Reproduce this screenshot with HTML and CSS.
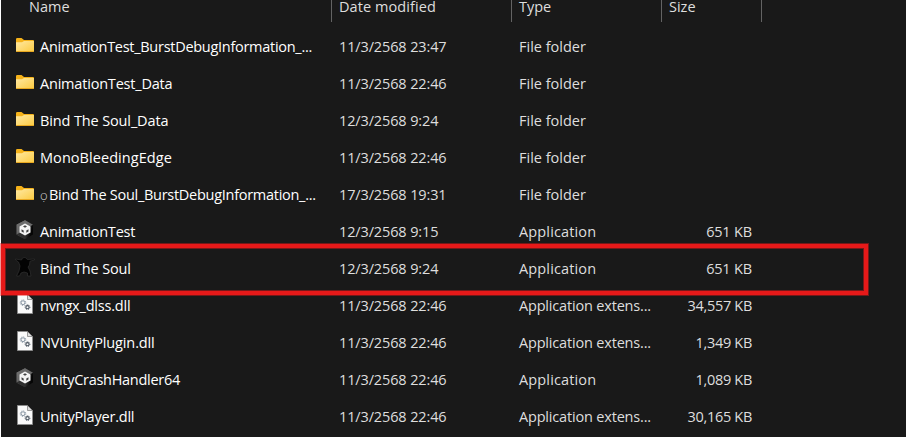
FILE: index.html
```html
<!DOCTYPE html>
<html lang="en">
<head>
<meta charset="utf-8">
<title>Files</title>
<link rel="stylesheet" href="styles.css">
</head>
<body>
<svg class="defs" width="0" height="0">
  <defs>
    <linearGradient id="gold" x1="0" y1="0" x2="1" y2="1"><stop offset="0" stop-color="#ffe9a3"/><stop offset="1" stop-color="#fcca40"/></linearGradient>
    <linearGradient id="hex" x1="0" y1="0" x2="1" y2="0.3"><stop offset="0" stop-color="#777"/><stop offset=".5" stop-color="#555"/><stop offset="1" stop-color="#050505"/></linearGradient>
    <symbol id="folder" viewBox="0 0 20 20">
      <path d="M1 2.200Q1 1 2.200 1H6.500L9 3H18Q19 3 19 4V14H1Z" fill="#f5b21a"/>
      <path d="M1 5.300H7L9 4H19V14Q19 15 18 15H2Q1 15 1 14Z" fill="url(#gold)"/>
      <path d="M1.300 14.500H18.700" stroke="#e9a820" stroke-width="1"/>
    </symbol>
    <symbol id="unity" viewBox="0 0 20 20">
      <path d="M10 .3L18 4.800V14.500L10 19.300L1.500 14.500V4.800Z" fill="url(#hex)"/>
      <path d="M10 .3L18 4.800L10 9L1.500 4.800Z" fill="#6c6c6c"/>
      <path d="M1.500 14.500L10 10V19.300Z" fill="#303030"/>
      <path d="M10 3.600L15.500 6.500V12.400L10 15.600L4.500 12.400V6.500Z" fill="#f4f4f4"/>
      <path d="M10 5.300L12 6.500L10 7.700L8 6.500ZM6.500 9.200L8.700 10.500V12.700L6.500 11.400ZM13.500 9.200L11.300 10.500V12.700L13.500 11.400Z" fill="#444"/>
    </symbol>
    <symbol id="dll" viewBox="0 0 20 20">
      <path d="M2.500 .5H12.500L17.500 5.500V19.500H2.500Z" fill="#fafafa" stroke="#8c8c8c"/>
      <path d="M12.500 .5V5.500H17.500Z" fill="#ddd" stroke="#777" stroke-width=".7"/>
      <circle cx="8" cy="8.700" r="1.900" fill="none" stroke="#8b98a5" stroke-width="1"/>
      <circle cx="8" cy="8.700" r="2.800" fill="none" stroke="#8b98a5" stroke-width="1" stroke-dasharray="1.100 1.100"/>
      <circle cx="12.500" cy="13.200" r="1.600" fill="none" stroke="#4b5560" stroke-width="1.100"/>
      <circle cx="12.500" cy="13.200" r="2.400" fill="none" stroke="#4b5560" stroke-width=".9" stroke-dasharray=".95 .935"/>
    </symbol>
    <symbol id="figure" viewBox="0 0 20 20">
      <path d="M.5 2L6.500 3L7.500 1L10 .3L12.500 2.500L19.500 2V3L15 4.200L14.500 8L13 10L15 14L16 19H12.500L12.500 16L9 15L6 16L4.500 19H1.500L4 14L5 9L3.500 5L.5 3Z" fill="#030303" stroke="#303030" stroke-width=".7"/>
    </symbol>
  </defs>
</svg>
<main class="files">
  <header class="head">
    <div class="h-name">Name</div>
    <div class="h-cell h-date">Date modified</div>
    <div class="h-cell">Type</div>
    <div class="h-cell">Size</div>
    <div class="h-end"></div>
  </header>
  <div class="row"><svg class="icon folder"><use href="#folder"/></svg><div class="name tightest">AnimationTest_BurstDebugInformation_...</div><div class="date">11/3/2568 23:47</div><div class="type">File folder</div><div class="size"></div></div>
  <div class="row"><svg class="icon folder"><use href="#folder"/></svg><div class="name tight">AnimationTest_Data</div><div class="date">11/3/2568 22:46</div><div class="type">File folder</div><div class="size"></div></div>
  <div class="row"><svg class="icon folder"><use href="#folder"/></svg><div class="name snug">Bind The Soul_Data</div><div class="date">12/3/2568 9:24</div><div class="type">File folder</div><div class="size"></div></div>
  <div class="row"><svg class="icon folder"><use href="#folder"/></svg><div class="name loose">MonoBleedingEdge</div><div class="date">11/3/2568 22:46</div><div class="type">File folder</div><div class="size"></div></div>
  <div class="row"><svg class="icon folder"><use href="#folder"/></svg><div class="name tightest"><span class="mark">&#x1ECD;</span>Bind The Soul_BurstDebugInformation_...</div><div class="date">17/3/2568 19:31</div><div class="type">File folder</div><div class="size"></div></div>
  <div class="row"><svg class="icon"><use href="#unity"/></svg><div class="name tight">AnimationTest</div><div class="date">12/3/2568 9:15</div><div class="type app">Application</div><div class="size short">651 KB</div></div>
  <div class="row"><svg class="icon"><use href="#figure"/></svg><div class="name snug">Bind The Soul</div><div class="date">12/3/2568 9:24</div><div class="type app">Application</div><div class="size short">651 KB</div></div>
  <div class="row"><svg class="icon"><use href="#dll"/></svg><div class="name tight">nvngx_dlss.dll</div><div class="date">11/3/2568 22:46</div><div class="type ext">Application extens...</div><div class="size">34,557 KB</div></div>
  <div class="row"><svg class="icon"><use href="#dll"/></svg><div class="name snug">NVUnityPlugin.dll</div><div class="date">11/3/2568 22:46</div><div class="type ext">Application extens...</div><div class="size">1,349 KB</div></div>
  <div class="row"><svg class="icon"><use href="#unity"/></svg><div class="name tightest">UnityCrashHandler64</div><div class="date">11/3/2568 22:46</div><div class="type app">Application</div><div class="size">1,089 KB</div></div>
  <div class="row"><svg class="icon"><use href="#dll"/></svg><div class="name tight">UnityPlayer.dll</div><div class="date">11/3/2568 22:46</div><div class="type ext">Application extens...</div><div class="size">30,165 KB</div></div>
  <div class="highlight"></div>
</main>
</body>
</html>
```
FILE: styles.css
```css
* { box-sizing: border-box; }
body { margin: 0; background: #191919; overflow: hidden; }
.defs { position: absolute; }
.files {
  position: relative;
  height: 437px;
  border-left: 1px solid #fff;
  font: 14.5px/20px "Open Sans", "Noto Sans", sans-serif;
  color: #dedede;
  white-space: nowrap;
}
.head { display: grid; grid-template-columns: 330px 180px 150px 100px 1px; height: 28px; line-height: 14px; }
.h-name { padding-left: 28px; }
.h-cell { height: 22px; border-left: 1px solid #636363; padding-left: 7px; }
.h-date { letter-spacing: .08px; }
.h-end { height: 22px; background: #636363; }
.row { display: grid; grid-template-columns: 20px 299px 180px 132px 106px; height: 37px; align-items: center; padding-left: 14px; }
.icon { width: 20px; height: 20px; align-self: start; margin-top: 7px; }
.icon.folder { margin-top: 9px; }
.name { padding-left: 5px; color: #fff; }
.tightest { letter-spacing: -.28px; }
.tight { letter-spacing: -.2px; }
.snug { letter-spacing: -.13px; }
.loose { letter-spacing: .06px; }
.mark { display: inline-block; width: 9px; font-size: 13px; font-weight: 300; line-height: 14px; color: #ccc; }
.date { padding-left: 5px; letter-spacing: -.13px; }
.type { padding-left: 5px; }
.app { letter-spacing: .14px; }
.ext { letter-spacing: -.18px; }
.size { text-align: right; letter-spacing: -.3px; }
.size.short { letter-spacing: -.17px; }
.highlight {
  position: absolute;
  left: -1px;
  top: 243px;
  width: 869px;
  height: 53px;
  border: 1px solid rgba(230, 25, 25, .45);
  box-shadow: inset 0 0 0 4px #e61919, inset 0 0 0 5px #751919;
}
```
